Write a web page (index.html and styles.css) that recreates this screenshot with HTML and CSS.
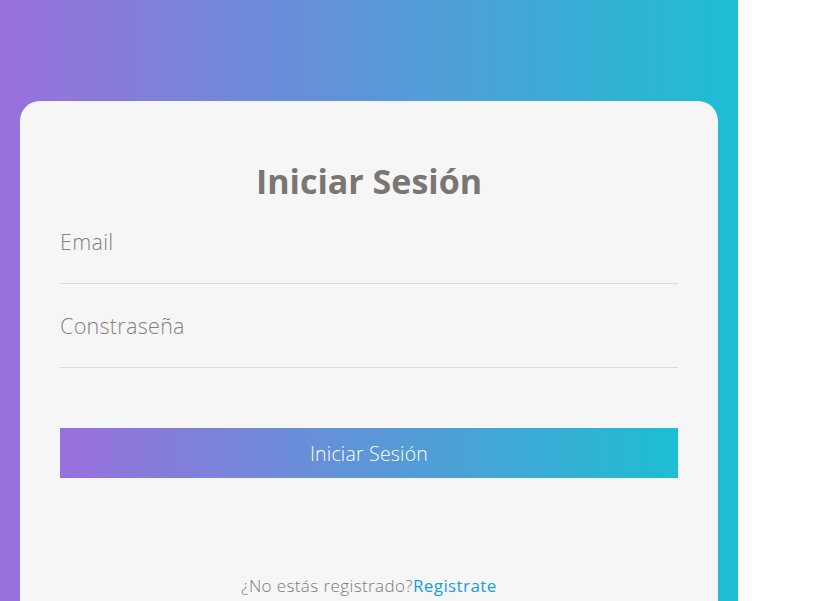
FILE: index.html
```html
<!DOCTYPE html>
<html lang="es">
<head>
<meta charset="utf-8">
<title>Iniciar Sesión</title>
<link rel="stylesheet" href="styles.css">
</head>
<body>
<div class="page">
  <form class="card">
    <h1 class="title">Iniciar Sesión</h1>
    <div class="field"><input class="input" type="email" placeholder="Email"></div>
    <div class="field"><input class="input" type="password" placeholder="Constraseña"></div>
    <button class="btn" type="button">Iniciar Sesión</button>
    <p class="footer">¿No estás registrado?<a class="link" href="#">Registrate</a></p>
  </form>
</div>
</body>
</html>
```
FILE: styles.css
```css
html, body {
  margin: 0;
  padding: 0;
  background: #ffffff;
}
body {
  font-family: "Open Sans", "Noto Sans", sans-serif;
  height: 601px;
  overflow: hidden;
}
.page {
  width: 738px;
  height: 601px;
  box-sizing: border-box;
  padding: 101px 20px 0;
  background: linear-gradient(90deg, #9a6fdc 0%, #1dbed3 100%);
  overflow: hidden;
}
.card {
  background: #f6f6f6;
  border-radius: 20px 20px 0 0;
  padding: 61px 40px 0;
  height: 500px;
  box-sizing: border-box;
  display: flex;
  flex-direction: column;
}
.title {
  margin: 0 0 -1px;
  text-align: center;
  font-size: 34px;
  line-height: 39px;
  font-weight: 700;
  color: #7a7673;
}
.field {
  border-bottom: 1px solid #dadada;
}
.input {
  display: block;
  width: 100%;
  box-sizing: border-box;
  border: none;
  background: transparent;
  outline: none;
  font-family: "Open Sans", sans-serif;
  font-weight: 300;
  font-size: 21.5px;
  letter-spacing: 0.3px;
  color: #7d7a78;
  padding: 0;
  height: 83px;
}
.input::placeholder {
  color: #85817f;
}
.btn {
  margin-top: 60px;
  height: 50px;
  border: none;
  padding: 0;
  background: linear-gradient(90deg, #9a6fdc 0%, #1dbed3 100%);
  color: #ffffff;
  font-family: "Open Sans", sans-serif;
  font-weight: 300;
  font-size: 19.5px;
  letter-spacing: 0.2px;
}
.footer {
  margin: 97px 0 0;
  text-align: center;
  font-size: 17px;
  line-height: 22px;
  letter-spacing: 0.4px;
  font-weight: 300;
  color: #7d7a78;
}
.link {
  color: #169ee3;
  font-weight: 500;
  text-decoration: none;
}
```
